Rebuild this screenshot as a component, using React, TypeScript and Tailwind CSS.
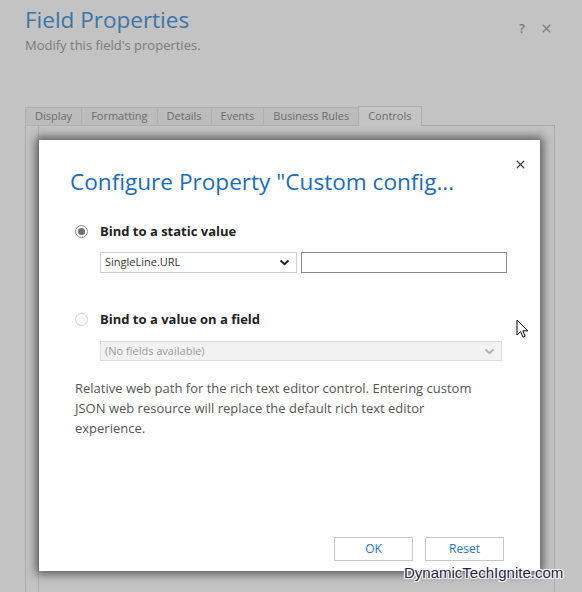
import { X } from "lucide-react";

const tabs = ["Display", "Formatting", "Details", "Events", "Business Rules", "Controls"];

function Radio({ checked }: { checked: boolean }) {
  return checked ? (
    <span className="flex h-[13px] w-[13px] items-center justify-center rounded-full border border-[#8c8c8c] bg-white">
      <span className="h-[7px] w-[7px] rounded-full bg-[#707070]" />
    </span>
  ) : (
    <span className="h-[13px] w-[13px] rounded-full border border-[#d2d2d2] bg-[#fbfbfb]" />
  );
}

function Chevron({ color }: { color: string }) {
  return (
    <svg width="11" height="7" viewBox="0 0 11 7" fill="none">
      <path d="M1.5 1.5 5.5 5.2 9.5 1.5" stroke={color} strokeWidth="2" />
    </svg>
  );
}

export default function App() {
  return (
    <div className="relative h-[592px] w-[582px] overflow-hidden bg-[#c3c3c3] font-['Open_Sans',sans-serif]">
      {/* page behind the overlay */}
      <div className="flex items-start justify-between pl-[25px] pr-[29px] pt-[4px]">
        <div>
          <h1 className="text-[22.5px] leading-[32px] text-[#3b76a7]">Field Properties</h1>
          <p className="text-[13px] leading-[18px] text-[#7b7b7b]">Modify this field's properties.</p>
        </div>
        <div className="mt-[15px] flex items-center gap-[15px] text-[#7d7d7d]">
          <span className="text-[13px] font-semibold">?</span>
          <X size={13} strokeWidth={2.2} />
        </div>
      </div>

      <div className="ml-[25px] mt-[52px] flex w-[530px] items-end">
        {tabs.map((t) => (
          <div
            key={t}
            className={
              t === "Controls"
                ? "flex h-[20px] items-center border border-b-0 border-[#adadad] bg-[#c4c4c4] px-[9px] text-[11px] text-[#6b6b6b]"
                : "flex h-[19px] items-center border border-r-0 border-[#b1b1b1] bg-[#bcbcbc] px-[9px] text-[11px] text-[#6b6b6b]"
            }
          >
            {t}
          </div>
        ))}
        <div className="flex-1 border-b border-[#a9a9a9]" />
      </div>
      <div className="ml-[25px] flex h-[480px] w-[530px] border-l border-r border-[#acacac] pl-[12px]">
        <div className="w-full border-l border-[#acacac]" />
      </div>

      {/* modal */}
      <div className="absolute left-[39px] top-[140px] flex h-[431px] w-[501px] flex-col bg-white pl-[31px] pr-[32px] shadow-[0_0_9px_3px_rgba(0,0,0,0.55)]">
        <button className="absolute right-[13px] top-[18px] text-[#444]">
          <X size={13} strokeWidth={2.4} />
        </button>
        <h2 className="mt-[26px] text-[22.6px] leading-[32px] text-[#1a6db8]">Configure Property "Custom config...</h2>

        <div className="mt-[24px] flex items-center gap-[12px] pl-[5px]">
          <Radio checked />
          <span className="text-[13px] font-bold text-[#222]">Bind to a static value</span>
        </div>
        <div className="ml-[30px] mt-[10px] flex gap-[4px]">
          <div className="flex h-[21px] w-[197px] items-center justify-between border border-[#cfcfcf] pl-[4px] pr-[6px] text-[11px] text-[#333]">
            <span>SingleLine.URL</span>
            <Chevron color="#222" />
          </div>
          <div className="h-[21px] w-[206px] border border-[#8a8a8a]" />
        </div>

        <div className="mt-[37px] flex items-center gap-[12px] pl-[5px]">
          <Radio checked={false} />
          <span className="text-[13px] font-bold text-[#222]">Bind to a value on a field</span>
        </div>
        <div className="ml-[30px] mt-[12px] flex h-[20px] w-[402px] items-center justify-between border border-[#dcdcdc] bg-[#f2f2f2] pl-[4px] pr-[6px] text-[11px] text-[#9b9b9b]">
          <span>(No fields available)</span>
          <Chevron color="#b0b0b0" />
        </div>

        <p className="ml-[5px] mt-[17px] text-[13px] leading-[20px] text-[#555]">
          Relative web path for the rich text editor control. Entering custom
          <br />
          JSON web resource will replace the default rich text editor
          <br />
          experience.
        </p>

        <div className="mt-auto mb-[10px] flex justify-end gap-[12px] pr-[4px]">
          <button className="h-[24px] w-[79px] border border-[#c8c8c8] text-[12px] text-[#1f72c4]">OK</button>
          <button className="h-[24px] w-[79px] border border-[#c8c8c8] text-[12px] text-[#1f72c4]">Reset</button>
        </div>
      </div>

      {/* mouse cursor */}
      <svg className="absolute left-[516px] top-[319px]" width="14" height="20" viewBox="0 0 14 20">
        <path d="M1 1v15l3.6-3.4 2.4 5.6 2.2-1-2.4-5.4h5z" fill="white" stroke="black" strokeWidth="1" strokeLinejoin="round" />
      </svg>

      {/* watermark */}
      <div className="absolute left-[404px] top-[562px] font-['Liberation_Sans',sans-serif] text-[15px] text-[#2a1d48] [text-shadow:1px_1px_0_#fff,-1px_-1px_0_#fff,1px_-1px_0_#fff,-1px_1px_0_#fff]">
        DynamicTechIgnite.com
      </div>
    </div>
  );
}
